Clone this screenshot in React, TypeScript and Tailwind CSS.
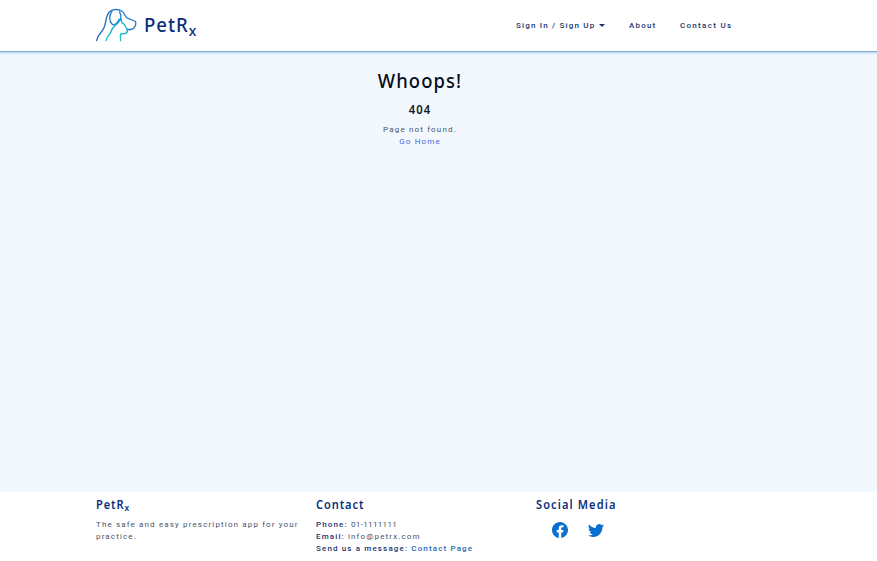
import React from 'react';
import { BsFacebook, BsTwitter } from 'react-icons/bs';

function DogLogo() {
  return (
    <svg className="h-[34px] w-[42px]" viewBox="0 0 42 34" fill="none" strokeWidth="1.3" strokeLinecap="round" strokeLinejoin="round">
      <defs>
        <linearGradient id="outer" x1="0" y1="0" x2="42" y2="0" gradientUnits="userSpaceOnUse">
          <stop stopColor="#2a62b4" />
          <stop offset="0.5" stopColor="#247fca" />
          <stop offset="1" stopColor="#2278cb" />
        </linearGradient>
        <linearGradient id="inner" x1="0" y1="8" x2="0" y2="34" gradientUnits="userSpaceOnUse">
          <stop stopColor="#1697cd" />
          <stop offset="1" stopColor="#18c4c4" />
        </linearGradient>
      </defs>
      <path stroke="url(#outer)" d="M.6 32.500C1.600 26 6.500 24.500 8.300 19C10.300 13 9.800 8 13.300 4C16.300 .7 22.500 .8 26.300 3.500C29 5.300 28.500 8.500 31.500 10.200L39.500 13.500C40.500 17 38.500 21 35 21.500L31 21.500" />
      <path stroke="url(#outer)" d="M16 3.500C13 6.500 12.900 13 16 16C18.500 18.500 22.500 14 23 11" />
      <path stroke="url(#outer)" d="M23.500 4C25 6 24.800 8.500 24.800 10.500" />
      <path stroke="url(#inner)" d="M10 32.500C11.200 27 14.700 26.500 15.700 22C16.700 18 21.700 17.500 24.800 10.500L26 14.800C29.200 15.500 28.800 18 30.700 20.500C32.700 23.500 30.500 26.500 25.600 25.700C23 26.500 25 30 24.500 32.500" />
    </svg>
  );
}

export default function App() {
  return (
    <div className="flex h-[561px] w-full flex-col bg-white font-[Roboto,sans-serif] text-[8px] leading-3 text-[#46546b]">
      <header className="h-[52px] shrink-0 border-b border-[#7fb0d4] bg-white shadow-[0_1px_2px_#a9cbe5] z-10">
        <div className="ml-24 flex h-[50px] w-[660px] items-center">
          <a className="flex items-center text-[#0b2f7b]">
            <DogLogo />
            <span className="ml-1.5 origin-left scale-x-[.93] font-['Noto_Sans',sans-serif] text-[20px] font-medium leading-6 tracking-[1px]">
              PetR<sub className="text-[15px] bottom-[-0.28em]">x</sub>
            </span>
          </a>
          <nav className="ml-auto mr-6 flex items-center pt-0.5 font-medium text-[#173571]">
            <a className="flex w-[113px] items-center tracking-[1.18px]">
              Sign In / Sign Up
              <span className="ml-1 mb-0.5 border-x-[3px] border-t-[3px] border-x-transparent border-t-[#173571]" />
            </a>
            <a className="w-[51px] tracking-[1.2px]">About</a>
            <a className="w-[52px] whitespace-nowrap tracking-[1.3px]">Contact Us</a>
          </nav>
        </div>
      </header>
      <main className="h-[440px] shrink-0 bg-[#f3f8fe] pt-4">
        <div className="ml-24 w-[648px] text-center tracking-[1.16px]">
          <h1 className="scale-x-[.92] font-['Noto_Sans',sans-serif] text-[20px] font-medium leading-[26px] tracking-[1.2px] text-[#050d19]">Whoops!</h1>
          <h2 className="mt-2.5 scale-x-[.94] font-['Noto_Sans',sans-serif] text-[12px] font-semibold leading-3 tracking-[1.1px] text-[#101a28]">404</h2>
          <p className="mt-2">Page not found.</p>
          <a className="block text-[#4169df]">Go Home</a>
        </div>
      </main>
      <footer className="ml-24 grid w-[660px] grid-cols-3 pt-1.5 tracking-[1.14px]">
        <section>
          <h3 className="mb-1.5 h-[15px] origin-left scale-x-[.92] font-['Noto_Sans',sans-serif] text-[12px] font-semibold leading-[14px] tracking-[1px] text-[#0b2f7b]">
            PetR<sub className="text-[9px]">x</sub>
          </h3>
          <p className="w-[212px]">The safe and easy prescription app for your practice.</p>
        </section>
        <section>
          <h3 className="mb-1.5 h-[15px] origin-left scale-x-[.92] font-['Noto_Sans',sans-serif] text-[12px] font-semibold leading-[14px] tracking-[1px] text-[#0b2f7b]">Contact</h3>
          <p><b className="font-medium text-[#173571]">Phone:</b> <span className="tracking-[0.36px]">01-1111111</span></p>
          <p><b className="font-medium text-[#173571]">Email:</b> info@petrx.com</p>
          <p className="font-medium text-[#173571]">Send us a message: <a className="text-[#2467b7]">Contact Page</a></p>
        </section>
        <section>
          <h3 className="h-[15px] origin-left scale-x-[.92] font-['Noto_Sans',sans-serif] text-[12px] font-semibold leading-[14px] tracking-[1.2px] text-[#0b2f7b]">Social Media</h3>
          <div className="ml-4 mt-[9px] flex gap-5 text-[16px] text-[#086fd0]">
            <BsFacebook />
            <BsTwitter />
          </div>
        </section>
      </footer>
    </div>
  );
}
